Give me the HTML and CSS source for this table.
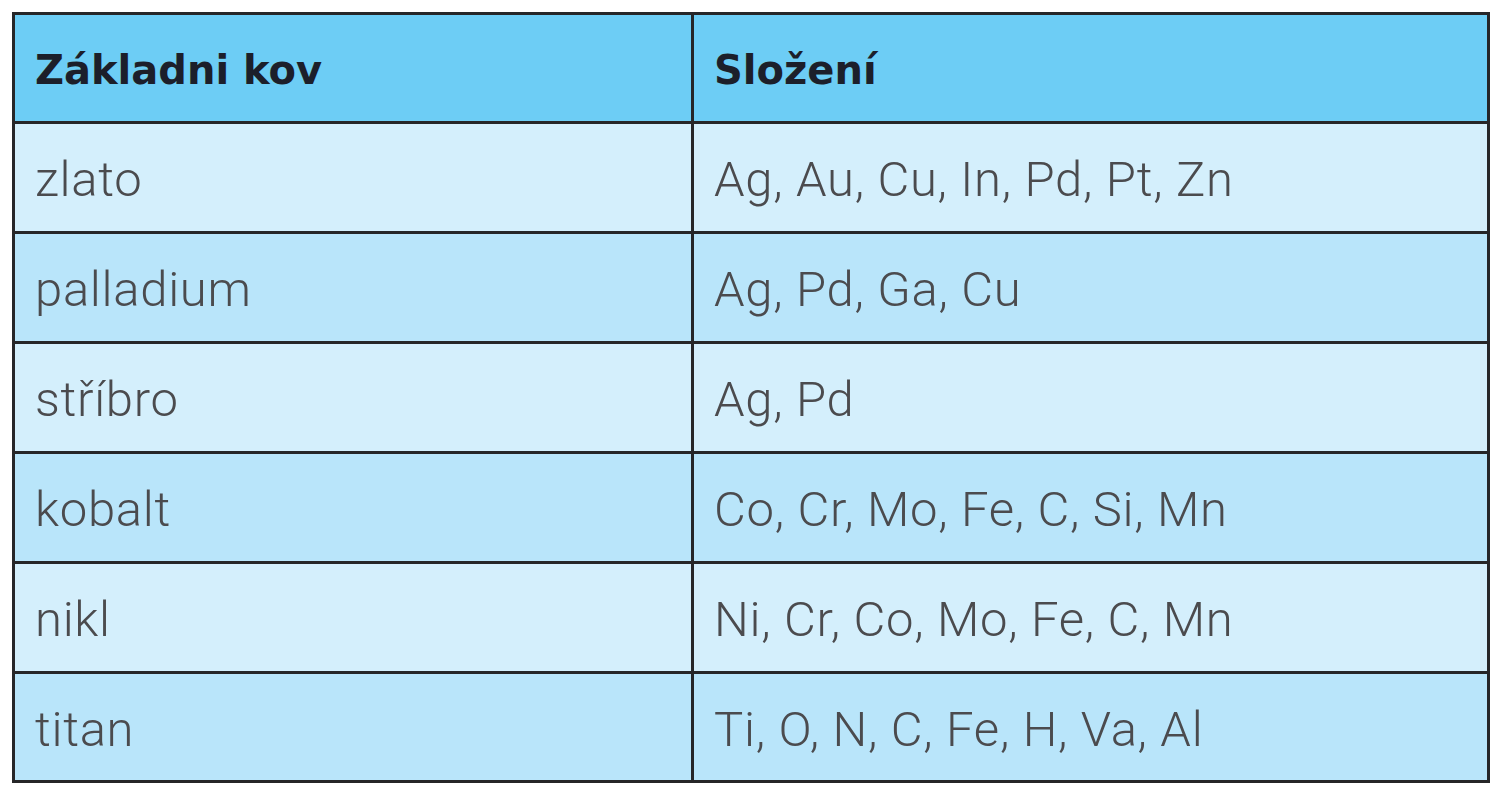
FILE: index.html
```html
<!DOCTYPE html>
<html lang="cs">
<head>
<meta charset="utf-8">
<title>Základni kov</title>
<link rel="stylesheet" href="styles.css">
</head>
<body>
<table class="metals">
  <colgroup><col class="c1"><col class="c2"></colgroup>
  <thead>
    <tr><th>Základni kov</th><th>Složení</th></tr>
  </thead>
  <tbody>
    <tr class="odd"><td>zlato</td><td>Ag, Au, Cu, In, Pd, Pt, Zn</td></tr>
    <tr class="even"><td>palladium</td><td>Ag, Pd, Ga, Cu</td></tr>
    <tr class="odd"><td>stříbro</td><td>Ag, Pd</td></tr>
    <tr class="even"><td>kobalt</td><td>Co, Cr, Mo, Fe, C, Si, Mn</td></tr>
    <tr class="odd"><td>nikl</td><td>Ni, Cr, Co, Mo, Fe, C, Mn</td></tr>
    <tr class="even last"><td>titan</td><td>Ti, O, N, C, Fe, H, Va, Al</td></tr>
  </tbody>
</table>
</body>
</html>
```

FILE: styles.css
```css
html, body {
  margin: 0;
  padding: 0;
  background: #ffffff;
}
body {
  padding: 12px;
  font-family: Roboto, "Liberation Sans", sans-serif;
}
.metals {
  border-collapse: separate;
  border-spacing: 0;
  border: 3px solid #262628;
  width: 1478px;
  table-layout: fixed;
}
.c1 { width: 679px; }
.c2 { width: 793px; }
.metals th,
.metals td {
  box-sizing: border-box;
  padding: 0 0 0 20px;
  text-align: left;
  vertical-align: middle;
  border-bottom: 3px solid #262628;
  white-space: nowrap;
}
.metals th:first-child,
.metals td:first-child {
  border-right: 3px solid #262628;
}
.metals th {
  height: 109px;
  background: #6dcdf5;
  color: #1c1f2a;
  font-family: "DejaVu Sans", "Liberation Sans", sans-serif;
  font-weight: 700;
  font-size: 40px;
  padding-top: 4px;
}
.metals td {
  height: 110px;
  color: #4b4b4e;
  font-weight: 300;
  font-size: 49px;
  letter-spacing: 0.7px;
  padding-top: 4px;
}
.metals .odd td { background: #d4effc; }
.metals .even td { background: #b9e5fa; }
.metals .last td {
  height: 106px;
  border-bottom: none;
}
```
